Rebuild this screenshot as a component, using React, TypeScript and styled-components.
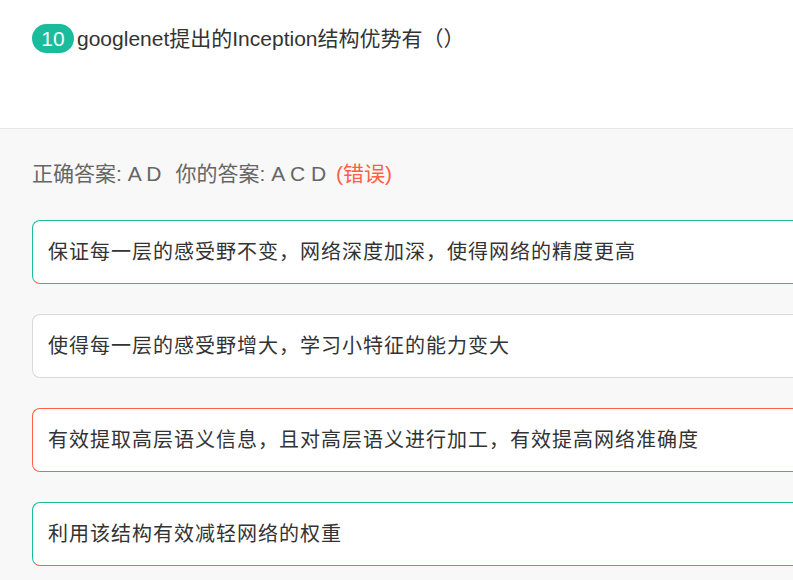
import styled, { createGlobalStyle } from 'styled-components'

const GlobalStyle = createGlobalStyle`
  html, body {
    margin: 0;
    padding: 0;
    overflow: hidden;
    background: #f8f8f8;
  }
  body {
    font-family: 'Liberation Sans', 'Noto Sans CJK SC', sans-serif;
  }
`

type OptionState = 'right' | 'wrong' | 'plain'

const options: { text: string; state: OptionState }[] = [
  { text: '保证每一层的感受野不变，网络深度加深，使得网络的精度更高', state: 'right' },
  { text: '使得每一层的感受野增大，学习小特征的能力变大', state: 'plain' },
  { text: '有效提取高层语义信息，且对高层语义进行加工，有效提高网络准确度', state: 'wrong' },
  { text: '利用该结构有效减轻网络的权重', state: 'right' },
]

export default function App() {
  return (
    <Page>
      <GlobalStyle />
      <Header>
        <Badge>10</Badge>
        <Title>googlenet提出的Inception结构优势有（）</Title>
      </Header>
      <Body>
        <AnswerLine>
          正确答案: A D<Gap />你的答案: A C D <Wrong>(错误)</Wrong>
        </AnswerLine>
        <OptionList>
          {options.map((o) => (
            <Option key={o.text} $state={o.state}>
              {o.text}
            </Option>
          ))}
        </OptionList>
      </Body>
    </Page>
  )
}

const Page = styled.div`
  width: 100%;
  min-height: 580px;
  background: #f8f8f8;
`

const Header = styled.div`
  height: 129px;
  box-sizing: border-box;
  background: #fff;
  border-bottom: 1px solid #e6e6e6;
  padding: 24px 0 0 32px;
  display: flex;
  align-items: flex-start;
`

const Badge = styled.span`
  width: 42px;
  height: 29px;
  border-radius: 15px;
  background: #1abc9c;
  color: #fff;
  font-size: 21px;
  line-height: 29px;
  text-align: center;
  flex-shrink: 0;
`

const Title = styled.h1`
  margin: 0 0 0 3px;
  font-size: 21px;
  font-weight: normal;
  line-height: 29px;
  color: #333;
  font-family: 'Liberation Sans', 'Noto Sans CJK SC', sans-serif;
`

const Body = styled.div`
  padding: 31px 0 0 32px;
`

const AnswerLine = styled.div`
  font-size: 21px;
  line-height: 28px;
  color: #666;
  display: flex;
  align-items: center;
  white-space: pre;
`

const Gap = styled.span`
  display: inline-block;
  width: 14px;
`

const Wrong = styled.span`
  color: #ff5f45;
  margin-left: 4px;
`

const OptionList = styled.div`
  margin-top: 32px;
  display: flex;
  flex-direction: column;
  gap: 30px;
`

const borderFor = (s: OptionState) => {
  if (s === 'right') return 'border-color: #1abc9c #1abc9c #ff5f45 #1abc9c;'
  if (s === 'wrong') return 'border-color: #ff5f45;'
  return 'border-color: #d9d9d9;'
}

const Option = styled.div<{ $state: OptionState }>`
  height: 64px;
  box-sizing: border-box;
  background: #fff;
  border: 1px solid;
  border-right: none;
  ${(p) => borderFor(p.$state)}
  border-radius: 8px 0 0 8px;
  padding: 0 0 3px 15px;
  display: flex;
  align-items: center;
  font-size: 20px;
  letter-spacing: 1px;
  color: #333;
  font-family: 'Noto Sans CJK SC', sans-serif;
`
